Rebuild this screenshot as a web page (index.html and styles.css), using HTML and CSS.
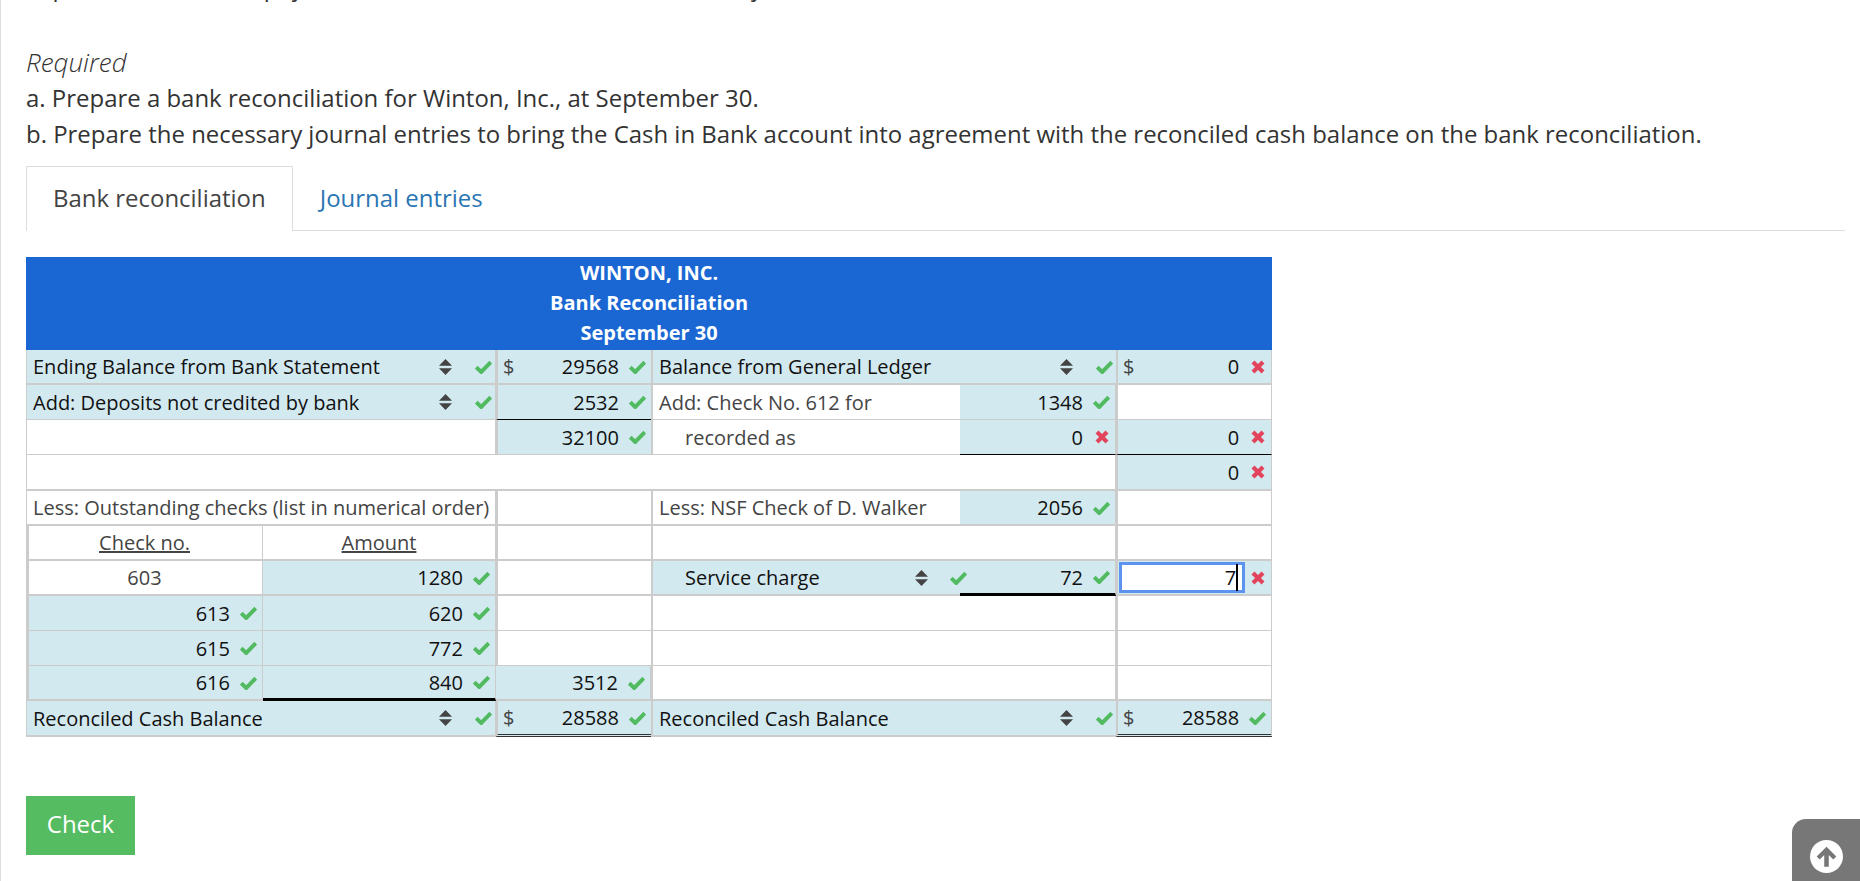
FILE: index.html
```html
<!DOCTYPE html>
<html lang="en">
<head>
  <meta charset="UTF-8" />
  <title>Bank Reconciliation</title>
  <link rel="stylesheet" href="styles.css">
</head>
<body>
  <svg class="defs" aria-hidden="true">
    <symbol id="check" viewBox="0 0 17 14"><path d="M1.2 7.2 L6.2 12 L15.8 2.2" fill="none" stroke="currentColor" stroke-width="4"/></symbol>
    <symbol id="cross" viewBox="0 0 14 14"><path d="M2 2 L12 12 M12 2 L2 12" fill="none" stroke="currentColor" stroke-width="4.2"/></symbol>
    <symbol id="sort" viewBox="0 0 13 16"><path d="M6.5 0 L13 6.8 H0 Z M0 9.2 H13 L6.5 16 Z" fill="currentColor"/></symbol>
  </svg>

  <p class="text clipped">September 30, and a payment on account from customer that day.</p>
  <p class="text required"><em>Required</em></p>
  <p class="text">a. Prepare a bank reconciliation for Winton, Inc., at September 30.</p>
  <p class="text">b. Prepare the necessary journal entries to bring the Cash in Bank account into agreement with the reconciled cash balance on the bank reconciliation.</p>

  <div class="tabs">
    <div class="tab active">Bank reconciliation</div>
    <a class="tab" href="#">Journal entries</a>
  </div>

  <table class="recon">
    <colgroup>
      <col class="col-a"><col class="col-b"><col class="col-c"><col class="col-d"><col class="col-e"><col class="col-f">
    </colgroup>
    <thead>
      <tr><th colspan="6">WINTON, INC.<br>Bank Reconciliation<br>September 30</th></tr>
    </thead>
    <tbody>
      <tr class="heavy">
        <td colspan="2" class="fill"><div class="sel"><span>Ending Balance from Bank Statement</span><svg class="sort"><use href="#sort"/></svg><svg class="ok"><use href="#check"/></svg></div></td>
        <td class="fill sep"><div class="num"><span class="cur">$</span>29568<svg class="ok"><use href="#check"/></svg></div></td>
        <td colspan="2" class="fill sep"><div class="sel"><span>Balance from General Ledger</span><svg class="sort"><use href="#sort"/></svg><svg class="ok"><use href="#check"/></svg></div></td>
        <td class="fill sep"><div class="num"><span class="cur">$</span>0<svg class="bad"><use href="#cross"/></svg></div></td>
      </tr>
      <tr>
        <td colspan="2" class="fill"><div class="sel"><span>Add: Deposits not credited by bank</span><svg class="sort"><use href="#sort"/></svg><svg class="ok"><use href="#check"/></svg></div></td>
        <td class="fill sep rule"><div class="num">2532<svg class="ok"><use href="#check"/></svg></div></td>
        <td class="sep label">Add: Check No. 612 for</td>
        <td class="fill"><div class="num">1348<svg class="ok"><use href="#check"/></svg></div></td>
        <td class="sep"></td>
      </tr>
      <tr>
        <td colspan="2"></td>
        <td class="fill sep"><div class="num">32100<svg class="ok"><use href="#check"/></svg></div></td>
        <td class="sep label indent">recorded as</td>
        <td class="fill rule"><div class="num">0<svg class="bad"><use href="#cross"/></svg></div></td>
        <td class="fill sep rule"><div class="num">0<svg class="bad"><use href="#cross"/></svg></div></td>
      </tr>
      <tr class="heavy gap">
        <td colspan="5"></td>
        <td class="fill sep"><div class="num">0<svg class="bad"><use href="#cross"/></svg></div></td>
      </tr>
      <tr class="heavy">
        <td colspan="2" class="label">Less: Outstanding checks (list in numerical order)</td>
        <td class="sep"></td>
        <td class="sep label">Less: NSF Check of D. Walker</td>
        <td class="fill"><div class="num">2056<svg class="ok"><use href="#check"/></svg></div></td>
        <td class="sep"></td>
      </tr>
      <tr class="heavy">
        <td class="inner head">Check no.</td>
        <td class="head">Amount</td>
        <td class="sep"></td>
        <td class="sep"></td>
        <td></td>
        <td class="sep"></td>
      </tr>
      <tr class="heavy">
        <td class="inner center">603</td>
        <td class="fill"><div class="num">1280<svg class="ok"><use href="#check"/></svg></div></td>
        <td class="sep"></td>
        <td class="fill sep indent-sel"><div class="sel over"><span>Service charge</span><svg class="sort"><use href="#sort"/></svg><svg class="ok"><use href="#check"/></svg></div></td>
        <td class="fill thick"><div class="num">72<svg class="ok"><use href="#check"/></svg></div></td>
        <td class="fill sep">
          <div class="entry">
            <div class="focus">7<span class="caret"></span></div>
            <svg class="bad"><use href="#cross"/></svg>
          </div>
        </td>
      </tr>
      <tr>
        <td class="inner fill"><div class="num">613<svg class="ok"><use href="#check"/></svg></div></td>
        <td class="fill"><div class="num">620<svg class="ok"><use href="#check"/></svg></div></td>
        <td class="sep"></td><td class="sep"></td><td></td><td class="sep"></td>
      </tr>
      <tr>
        <td class="inner fill"><div class="num">615<svg class="ok"><use href="#check"/></svg></div></td>
        <td class="fill"><div class="num">772<svg class="ok"><use href="#check"/></svg></div></td>
        <td class="sep"></td><td class="sep"></td><td></td><td class="sep"></td>
      </tr>
      <tr class="heavy">
        <td class="inner fill"><div class="num">616<svg class="ok"><use href="#check"/></svg></div></td>
        <td class="fill thick"><div class="num">840<svg class="ok"><use href="#check"/></svg></div></td>
        <td class="fill"><div class="num">3512<svg class="ok"><use href="#check"/></svg></div></td>
        <td class="sep"></td><td></td><td class="sep"></td>
      </tr>
      <tr class="heavy last">
        <td colspan="2" class="fill"><div class="sel"><span>Reconciled Cash Balance</span><svg class="sort"><use href="#sort"/></svg><svg class="ok"><use href="#check"/></svg></div></td>
        <td class="fill sep double"><div class="num"><span class="cur">$</span>28588<svg class="ok"><use href="#check"/></svg></div></td>
        <td colspan="2" class="fill sep"><div class="sel"><span>Reconciled Cash Balance</span><svg class="sort"><use href="#sort"/></svg><svg class="ok"><use href="#check"/></svg></div></td>
        <td class="fill sep double"><div class="num"><span class="cur">$</span>28588<svg class="ok"><use href="#check"/></svg></div></td>
      </tr>
    </tbody>
  </table>

  <button class="check-btn">Check</button>

  <div class="to-top">
    <svg viewBox="0 0 32 32" width="33" height="33"><circle cx="16" cy="16" r="16" fill="#fff"/><path d="M16 6.5 L25.5 16 L22.6 18.9 L18.2 14.6 V26 H13.8 V14.6 L9.4 18.9 L6.5 16 Z" fill="#777"/></svg>
  </div>
</body>
</html>
```

FILE: styles.css
```css
html, body {
  height: 100%;
  overflow: hidden;
}
body {
  margin: 0;
  padding-left: 25px;
  border-left: 1px solid #ddd;
  background-color: #fff;
  color: #333;
  font-family: "Open Sans", sans-serif;
  font-size: 23.96px;
}
.defs {
  display: none;
}
.text {
  margin: 0;
  line-height: 36px;
  white-space: nowrap;
}
.clipped {
  margin-top: -31px;
}
.required {
  margin-top: 39px;
  font-size: 26px;
  font-weight: 300;
}
.tabs {
  display: flex;
  width: 1819px;
  margin-top: 14px;
  border-bottom: 1px solid #ddd;
}
.tab {
  height: 63px;
  line-height: 62px;
  padding: 0 26px;
  border: 1px solid transparent;
  border-bottom: none;
  color: #2a75b3;
  text-decoration: none;
}
.tab.active {
  position: relative;
  margin-bottom: -1px;
  height: 64px;
  border-color: #ddd;
  background-color: #fff;
  color: #444;
}
.recon {
  table-layout: fixed;
  width: 1246px;
  margin-top: 26px;
  border-spacing: 0;
  border-collapse: separate;
  font-size: 20px;
}
.col-a { width: 237px; }
.col-b { width: 233px; }
.col-c { width: 155px; }
.col-d { width: 309px; }
.col-e { width: 156px; }
.col-f { width: 156px; }
.recon th {
  box-sizing: border-box;
  height: 93px;
  padding: 0 0 2px;
  background-color: #1a67d4;
  color: #fff;
  font-size: 20px;
  font-weight: 700;
  line-height: 30px;
}
.recon td {
  box-sizing: border-box;
  height: 35px;
  padding: 0;
  border-bottom: 1px solid #ccc;
  border-right: 1px solid #ccc;
  color: #111;
  white-space: nowrap;
}
.recon tr > td:first-child {
  border-left: 1px solid #ccc;
}
.recon .heavy td {
  border-bottom-width: 2px;
}
.recon .gap td {
  height: 36px;
}
.recon td.fill {
  background-color: #d3e9f0;
}
.recon td.sep {
  border-left: 2px solid #ccc;
  border-right-width: 0;
}
.recon td:last-child {
  border-right: 1px solid #ccc;
}
.recon td.label {
  padding-left: 6px;
  color: #444;
}
.recon td.indent {
  padding-left: 32px;
}
.recon td.head {
  color: #444;
  text-align: center;
  text-decoration: underline;
}
.recon td.center {
  color: #444;
  text-align: center;
}
.recon td.inner {
  border-left: 2px solid #fff;
  box-shadow: inset 2px 0 #ccc;
}
.recon td.rule {
  border-bottom: 1px solid #000;
}
.recon td.thick {
  border-bottom: 3px solid #000;
}
.recon td.double {
  border-bottom: 3px double #333;
}
.recon .last td {
  height: 36px;
}
.sel {
  display: flex;
  align-items: center;
  padding: 0 3px 0 6px;
}
.sel span {
  flex: 1;
}
.sel .sort {
  width: 13px;
  height: 16px;
  color: #444;
}
.sel .ok {
  margin-left: 23px;
}
.indent-sel .sel {
  padding-left: 32px;
}
.sel.over {
  padding-right: 0;
  margin-right: -7px;
}
.sel.over .sort {
  margin-right: -1px;
}
.num {
  display: flex;
  align-items: center;
  justify-content: flex-end;
  padding-right: 5px;
}
.cur {
  margin-right: auto;
  padding-left: 5px;
  color: #444;
}
.ok {
  width: 17px;
  height: 14px;
  margin-left: 10px;
  color: #52bb62;
}
.bad {
  width: 14px;
  height: 14px;
  margin: 0 1px 0 12px;
  color: #e2445c;
}
.entry {
  display: flex;
  align-items: center;
  padding-right: 5px;
}
.focus {
  box-sizing: border-box;
  flex: 1;
  display: flex;
  justify-content: flex-end;
  align-items: center;
  height: 31px;
  margin-left: 1px;
  padding-right: 4px;
  border: 3px solid #5b93ee;
  background-color: #fff;
}
.entry .bad {
  margin-left: 6px;
}
.caret {
  width: 2px;
  height: 27px;
  background-color: #000;
}
.check-btn {
  display: block;
  width: 109px;
  height: 59px;
  margin-top: 59px;
  padding: 0 0 4px;
  border: none;
  background-color: #55bc62;
  color: #fff;
  font-family: inherit;
  font-size: 24px;
}
.to-top {
  position: fixed;
  right: 0;
  bottom: 0;
  display: flex;
  justify-content: center;
  box-sizing: border-box;
  width: 68px;
  height: 62px;
  padding-top: 21px;
  background-color: #777;
  border-top-left-radius: 14px;
}
```
